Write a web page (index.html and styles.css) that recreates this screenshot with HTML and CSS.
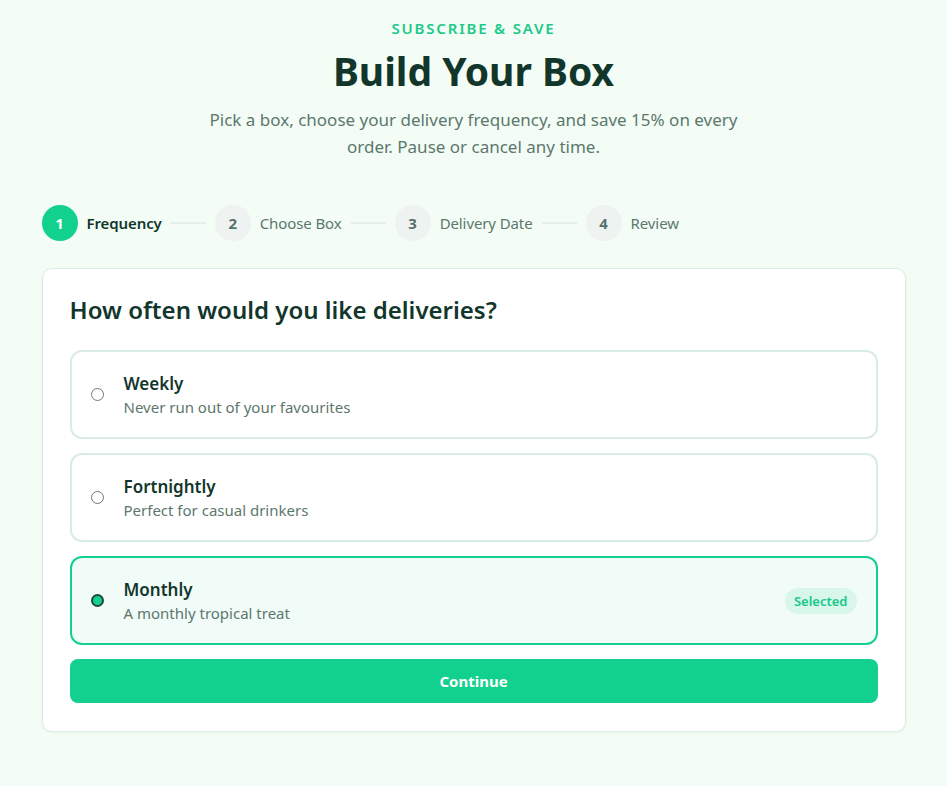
FILE: index.html
```html
<!DOCTYPE html>
<html lang="en">
<head>
<meta charset="utf-8">
<title>Build Your Box</title>
<link rel="stylesheet" href="styles.css">
</head>
<body>
<main class="page">
  <header class="hero">
    <p class="eyebrow">SUBSCRIBE &amp; SAVE</p>
    <h1 class="title">Build Your Box</h1>
    <p class="lead">Pick a box, choose your delivery frequency, and save 15% on every order. Pause or cancel any time.</p>
  </header>

  <ol class="stepper">
    <li class="step step-active"><span class="step-num">1</span><span class="step-label">Frequency</span></li>
    <li class="step-line"></li>
    <li class="step"><span class="step-num">2</span><span class="step-label">Choose Box</span></li>
    <li class="step-line"></li>
    <li class="step"><span class="step-num">3</span><span class="step-label">Delivery Date</span></li>
    <li class="step-line"></li>
    <li class="step"><span class="step-num">4</span><span class="step-label">Review</span></li>
  </ol>

  <section class="card">
    <h2 class="card-title">How often would you like deliveries?</h2>
    <div class="options">
      <label class="option">
        <input class="radio" type="radio" name="freq">
        <span class="option-text">
          <span class="option-name">Weekly</span>
          <span class="option-desc">Never run out of your favourites</span>
        </span>
      </label>
      <label class="option">
        <input class="radio" type="radio" name="freq">
        <span class="option-text">
          <span class="option-name">Fortnightly</span>
          <span class="option-desc">Perfect for casual drinkers</span>
        </span>
      </label>
      <label class="option option-selected">
        <input class="radio" type="radio" name="freq" checked>
        <span class="option-text">
          <span class="option-name">Monthly</span>
          <span class="option-desc">A monthly tropical treat</span>
        </span>
        <span class="badge">Selected</span>
      </label>
    </div>
    <button class="btn" type="button">Continue</button>
  </section>
</main>
</body>
</html>
```

FILE: styles.css
```css
* { box-sizing: border-box; }

html, body {
  margin: 0;
  padding: 0;
  background: #f3fdf6;
}

body {
  font-family: "Noto Sans", "Open Sans", sans-serif;
  color: #12362b;
}

.page {
  max-width: 896px;
  margin: 0 auto;
  padding: 17px 16px 40px;
}

.hero {
  text-align: center;
}

.eyebrow {
  margin: 0;
  font-size: 15px;
  line-height: 22px;
  font-weight: 600;
  letter-spacing: 1.8px;
  color: #1cc98a;
}

.title {
  margin: 7px 0 0;
  font-size: 39px;
  line-height: 50px;
  font-weight: 700;
  color: #12362b;
}

.lead {
  margin: 10px auto 0;
  max-width: 560px;
  font-size: 17px;
  line-height: 27px;
  color: #5d776d;
}

.stepper {
  list-style: none;
  margin: 45px 0 0;
  padding: 0;
  display: flex;
  align-items: center;
  gap: 9px;
}

.step {
  display: flex;
  align-items: center;
  gap: 9px;
}

.step-num {
  width: 36px;
  height: 36px;
  border-radius: 50%;
  background: #eef3f1;
  color: #56716a;
  display: flex;
  align-items: center;
  justify-content: center;
  font-size: 15px;
  font-weight: 700;
}

.step-label {
  font-size: 15px;
  color: #5d776d;
  letter-spacing: -0.1px;
}

.step-active .step-num {
  background: #12d18e;
  color: #ffffff;
}

.step-active .step-label {
  color: #12362b;
  font-weight: 600;
}

.step-line {
  width: 35px;
  height: 2px;
  background: #e4eeea;
}

.card {
  margin-top: 27px;
  background: #ffffff;
  border: 1px solid #dcebe5;
  border-radius: 10px;
  padding: 24px 27px 28px;
  box-shadow: 0 1px 3px rgba(20, 60, 45, 0.06);
}

.card-title {
  margin: 0;
  font-size: 24px;
  line-height: 34px;
  font-weight: 600;
  color: #12362b;
}

.options {
  margin-top: 23px;
  display: flex;
  flex-direction: column;
  gap: 14px;
}

.option {
  display: flex;
  align-items: center;
  gap: 20px;
  min-height: 89px;
  padding: 0 19px;
  border: 2px solid #d9ebe5;
  border-radius: 12px;
  background: #ffffff;
  cursor: pointer;
}

.option-selected {
  border-color: #12d18e;
  background: #f1fcf8;
}

.radio {
  appearance: none;
  -webkit-appearance: none;
  margin: 0;
  flex: none;
  width: 13px;
  height: 13px;
  border-radius: 50%;
  border: 1px solid #767676;
  background: #ffffff;
}

.radio:checked {
  border: 2px solid #1e4a3b;
  background: #12d18e;
}

.option-text {
  flex: 1;
  display: flex;
  flex-direction: column;
  gap: 2px;
}

.option-name {
  font-size: 17px;
  line-height: 22px;
  font-weight: 600;
  color: #12362b;
}

.option-desc {
  font-size: 15px;
  line-height: 20px;
  color: #5d776d;
}

.badge {
  background: #d9f6ea;
  color: #14c98a;
  font-size: 13px;
  font-weight: 600;
  line-height: 18px;
  padding: 4px 9px;
  border-radius: 999px;
}

.btn {
  margin-top: 14px;
  width: 100%;
  height: 44px;
  border: 0;
  border-radius: 8px;
  background: #12d18e;
  color: #ffffff;
  font-family: inherit;
  font-size: 15px;
  font-weight: 700;
  cursor: pointer;
}
```
